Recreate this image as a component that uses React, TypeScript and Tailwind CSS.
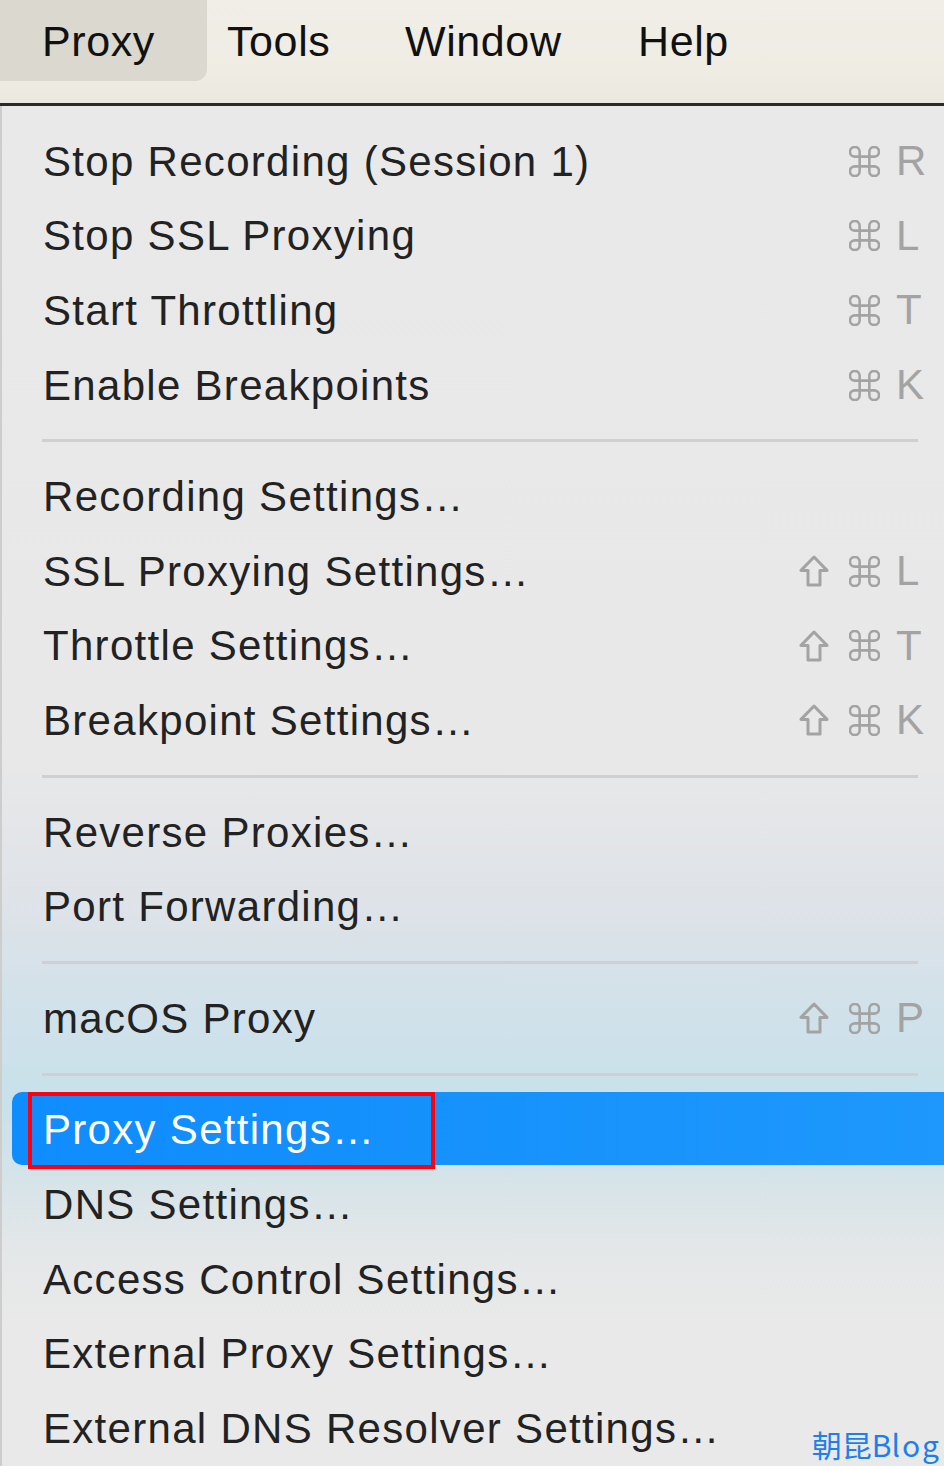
import React from "react";

const CmdIcon = () => (
  <svg width="31" height="31" viewBox="2.4 2.4 19.2 19.2" fill="none" stroke="#a3a3a3" strokeWidth="1.6" strokeLinecap="round" strokeLinejoin="round">
    <path d="M15 6v12a3 3 0 1 0 3-3H6a3 3 0 1 0 3 3V6a3 3 0 1 0-3 3h12a3 3 0 1 0-3-3" />
  </svg>
);

const ShiftIcon = () => (
  <svg width="30" height="32" viewBox="0 0 30 32" fill="none" stroke="#a3a3a3" strokeWidth="3" strokeLinejoin="round">
    <path d="M15 2 L2 15.4 H9 V30 H21 V15.4 H28 Z" />
  </svg>
);

type Item = { label: string; shift?: boolean; key?: string };
type Entry = Item | "sep" | "hl";

const entries: Entry[] = [
  { label: "Stop Recording (Session 1)", key: "R" },
  { label: "Stop SSL Proxying", key: "L" },
  { label: "Start Throttling", key: "T" },
  { label: "Enable Breakpoints", key: "K" },
  "sep",
  { label: "Recording Settings…" },
  { label: "SSL Proxying Settings…", shift: true, key: "L" },
  { label: "Throttle Settings…", shift: true, key: "T" },
  { label: "Breakpoint Settings…", shift: true, key: "K" },
  "sep",
  { label: "Reverse Proxies…" },
  { label: "Port Forwarding…" },
  "sep",
  { label: "macOS Proxy", shift: true, key: "P" },
  "sep",
  "hl",
  { label: "DNS Settings…" },
  { label: "Access Control Settings…" },
  { label: "External Proxy Settings…" },
  { label: "External DNS Resolver Settings…" },
];

const font = { fontFamily: '"Liberation Sans", Arial, sans-serif' };

export default function App() {
  return (
    <div className="relative w-[944px] h-[1466px] overflow-hidden bg-[#e9e9e9]" style={font}>
      {/* menu bar */}
      <div className="flex h-[103px] bg-[linear-gradient(180deg,#f1eee7_0%,#efece4_70%,#ebe8e0_100%)] text-[43px] text-[#111] tracking-[0.6px]">
        <div className="w-[207px] h-[81px] rounded-br-[12px] bg-[#dad8cf] pl-[42px] flex items-center pt-[2px]">Proxy</div>
        <div className="ml-[20px] w-[178px] h-[81px] flex items-center pt-[2px]">Tools</div>
        <div className="w-[233px] h-[81px] flex items-center pt-[2px]">Window</div>
        <div className="h-[81px] flex items-center pt-[2px]">Help</div>
      </div>
      <div className="h-[3px] bg-[#2a2a2a]" />
      {/* menu */}
      <div className="h-[1360px] border-l-[2px] border-[#cdcdcd] pt-[18px] bg-[linear-gradient(180deg,#e9e9e9_0%,#e8e8e8_48%,#dfe3e8_58%,#d2e1ea_66%,#c8e1ea_73%,#d3e3e9_78%,#e4e7e8_84%,#e9e9e9_90%)]">
        {entries.map((e, i) => {
          if (e === "sep")
            return (
              <div key={i} className="h-[37px] flex items-center pl-[40px] pr-[26px]">
                <div className="h-[3px] w-full bg-[#d0d0d0]" />
              </div>
            );
          if (e === "hl")
            return (
              <div key={i} className="relative h-[74.6px] ml-[10px] flex items-center">
                <div className="absolute left-0 top-[-1px] h-[73px] w-[960px] rounded-[10px] bg-[linear-gradient(90deg,#0f8cfe,#1e98fb)]" />
                <div className="relative pl-[31px] text-[42px] text-white tracking-[1.3px]">Proxy Settings…</div>
                <div className="absolute left-[16px] top-[-1px] w-[407px] h-[77px] border-[4px] border-[#ff0010]" />
              </div>
            );
          return (
            <div key={i} className="h-[74.6px] flex items-center justify-between pl-[41px] pr-[22px]">
              <span className="text-[42px] text-[#222] tracking-[1.3px]">{e.label}</span>
              {e.key && (
                <div className="flex items-center">
                  {e.shift && (
                    <div className="mr-[20px] flex items-center">
                      <ShiftIcon />
                    </div>
                  )}
                  <CmdIcon />
                  <span className="ml-[16px] w-[26px] text-[42px] text-[#a3a3a3] leading-none">{e.key}</span>
                </div>
              )}
            </div>
          );
        })}
      </div>
      <div
        className="absolute right-[3px] bottom-[2px] text-[30px] text-[#1f7fe9] leading-[40px]"
        style={{ fontFamily: '"Noto Sans CJK SC", "Noto Sans", sans-serif' }}
      >
        朝昆B<span className="tracking-[2px]">log</span>
      </div>
    </div>
  );
}
